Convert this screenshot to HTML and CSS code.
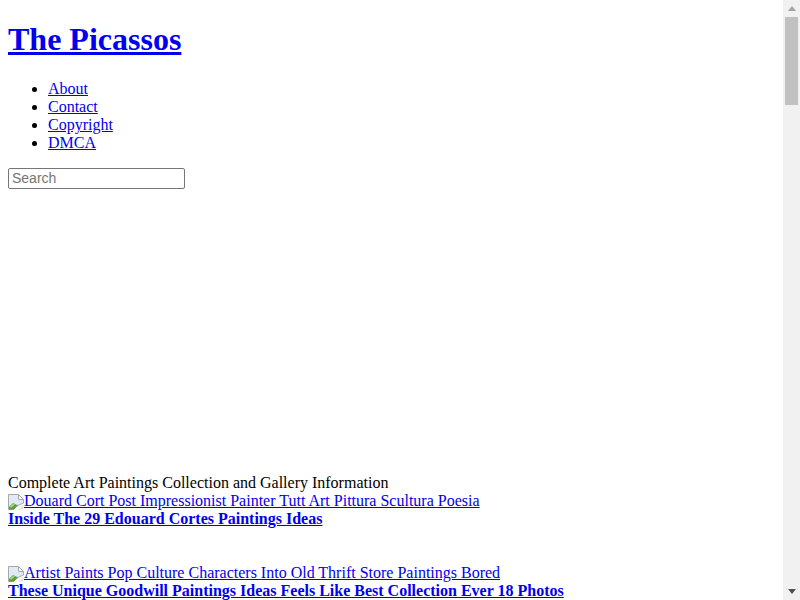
FILE: index.html
```html
<!DOCTYPE html>
<html lang="en">
<head>
  <meta charset="UTF-8" />
  <title>The Picassos</title>
  <link rel="stylesheet" href="styles.css">
</head>
<body>
  <header>
    <h1><a href="#">The Picassos</a></h1>
    <ul>
      <li><a href="#">About</a></li>
      <li><a href="#">Contact</a></li>
      <li><a href="#">Copyright</a></li>
      <li><a href="#">DMCA</a></li>
    </ul>
    <form class="search-form">
      <input type="text" class="search-input" placeholder="Search" />
    </form>
  </header>

  <div class="ad-space"></div>

  <div>Complete Art Paintings Collection and Gallery Information</div>

  <div class="post">
    <a href="#" class="post-image"><svg class="broken-icon" width="16" height="16" viewBox="0 0 16 16"><path d="M.5 .5h10l5 5v3.500l-7 3-3 3.500h-5z" fill="#dfe9f8" stroke="#a9a9a9"/><path d="M10.500 .5v5h5z" fill="#fff" stroke="#a9a9a9"/><path d="M1 15.500v-2.500l4-4 3 1.500 2 1-4 4z" fill="#5c9e35"/><path d="M2 12.500l3-3 2 1-4 3.500z" fill="#a6d17f"/><path d="M10 15.500l5.500-5v5z" fill="#e2e2e2"/></svg>Douard Cort Post Impressionist Painter Tutt Art Pittura Scultura Poesia</a>
    <div><a href="#" class="post-title">Inside The 29 Edouard Cortes Paintings Ideas</a></div>
  </div>

  <div class="post">
    <a href="#" class="post-image"><svg class="broken-icon" width="16" height="16" viewBox="0 0 16 16"><path d="M.5 .5h10l5 5v3.500l-7 3-3 3.500h-5z" fill="#dfe9f8" stroke="#a9a9a9"/><path d="M10.500 .5v5h5z" fill="#fff" stroke="#a9a9a9"/><path d="M1 15.500v-2.500l4-4 3 1.500 2 1-4 4z" fill="#5c9e35"/><path d="M2 12.500l3-3 2 1-4 3.500z" fill="#a6d17f"/><path d="M10 15.500l5.500-5v5z" fill="#e2e2e2"/></svg>Artist Paints Pop Culture Characters Into Old Thrift Store Paintings Bored</a>
    <div><a href="#" class="post-title">These Unique Goodwill Paintings Ideas Feels Like Best Collection Ever 18 Photos</a></div>
  </div>

  <div class="scrollbar">
    <span class="arrow-up"></span>
    <div class="scroll-track"><div class="scroll-thumb"></div></div>
    <span class="arrow-down"></span>
  </div>
</body>
</html>
```

FILE: styles.css
```css
html {
  overflow: hidden;
  height: 100%;
}

body {
  margin: 8px;
  font-family: "Liberation Serif", serif;
  font-size: 16px;
  line-height: 18px;
  color: #000;
  background: #fff;
}

a {
  color: #0000ee;
}

h1 {
  font-size: 32px;
  line-height: 37px;
  margin: 13.44px 0 21.44px;
}

ul {
  margin: 16px 0;
  padding-left: 40px;
}

.search-form {
  display: block;
  line-height: 0;
}

.search-input {
  width: 177px;
  height: 21px;
  box-sizing: border-box;
  padding: 1px 3px;
  border: 1px solid #767676;
  border-radius: 2px;
  font-family: "Liberation Sans", sans-serif;
  font-size: 14px;
}

.search-input::placeholder {
  color: #757575;
}

.ad-space {
  height: 285px;
}

.post {
  margin-bottom: 36px;
}

.post-image {
  display: block;
  height: 18px;
}

.broken-icon {
  vertical-align: -4px;
}

.post-title {
  font-weight: bold;
}

.scrollbar {
  position: fixed;
  top: 0;
  right: 0;
  width: 17px;
  height: 600px;
  background: #f1f1f1;
  display: flex;
  flex-direction: column;
  align-items: center;
}

.arrow-up,
.arrow-down {
  flex: none;
  width: 0;
  height: 0;
  border-left: 4px solid transparent;
  border-right: 4px solid transparent;
}

.arrow-up {
  margin: 6px 0;
  border-bottom: 5px solid #a3a3a3;
}

.arrow-down {
  margin: 6px 0;
  border-top: 5px solid #505050;
}

.scroll-track {
  flex: 1;
  width: 13px;
}

.scroll-thumb {
  height: 88px;
  background: #c1c1c1;
}
```
